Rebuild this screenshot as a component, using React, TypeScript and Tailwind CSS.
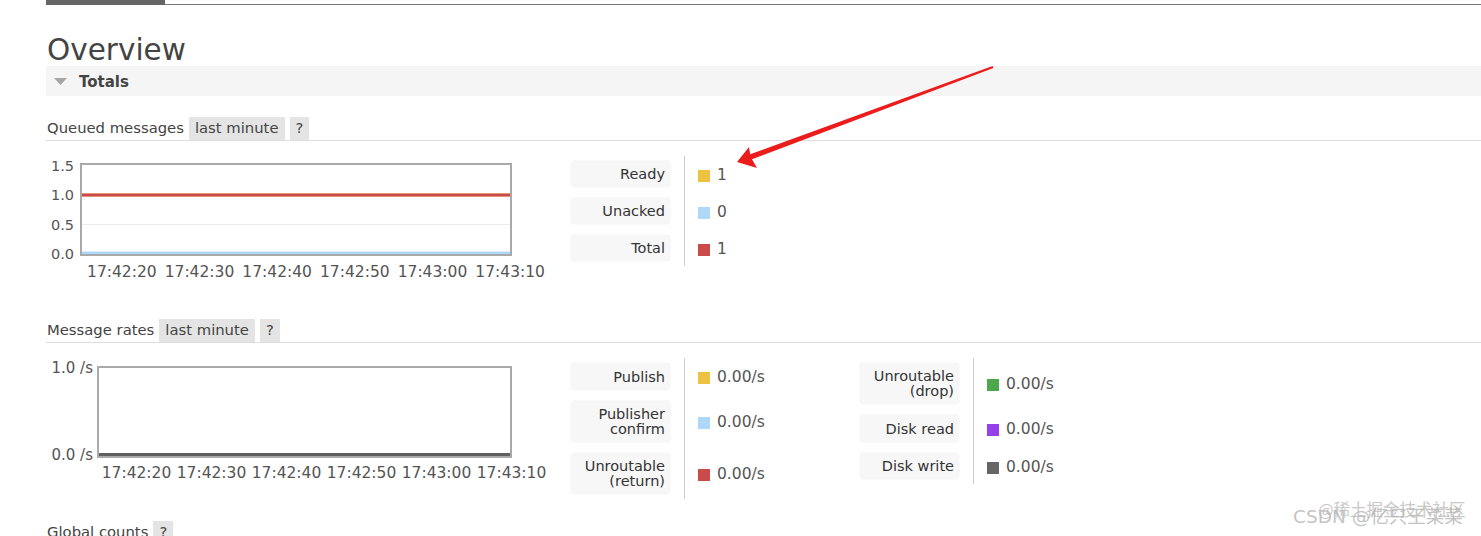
import React from 'react'

const YELLOW = '#edc240'
const BLUE = '#afd8f8'
const RED = '#cb4b4b'
const GREEN = '#4da74d'
const PURPLE = '#9440ed'
const GREY = '#666666'

const times = ['17:42:20', '17:42:30', '17:42:40', '17:42:50', '17:43:00', '17:43:10']

type LegendRow = { label: string[]; color: string; value: string; h: string }

const queued: LegendRow[] = [
    { label: ['Ready'], color: YELLOW, value: '1', h: 'h-[26px]' },
    { label: ['Unacked'], color: BLUE, value: '0', h: 'h-[26px]' },
    { label: ['Total'], color: RED, value: '1', h: 'h-[26px]' },
]

const ratesLeft: LegendRow[] = [
    { label: ['Publish'], color: YELLOW, value: '0.00/s', h: 'h-[27px]' },
    { label: ['Publisher', 'confirm'], color: BLUE, value: '0.00/s', h: 'h-[41px]' },
    { label: ['Unroutable', '(return)'], color: RED, value: '0.00/s', h: 'h-[41px]' },
]

const ratesRight: LegendRow[] = [
    { label: ['Unroutable', '(drop)'], color: GREEN, value: '0.00/s', h: 'h-[41px]' },
    { label: ['Disk read'], color: PURPLE, value: '0.00/s', h: 'h-[27px]' },
    { label: ['Disk write'], color: GREY, value: '0.00/s', h: 'h-[26px]' },
]

function Badge({ children }: { children: React.ReactNode }) {
    return (
        <span className="h-[23px] px-[6px] bg-[#e4e4e4] flex items-center text-[#444]">{children}</span>
    )
}

function SectionHeader({ title, range = true }: { title: string; range?: boolean }) {
    return (
        <div className="flex items-center gap-[5px] border-b border-[#dddddd] text-[14.8px]">
            <span className="h-[23px] flex items-center pl-[1px]">{title}</span>
            {range && <Badge>last minute</Badge>}
            <Badge>?</Badge>
        </div>
    )
}

function Legend({ rows, valuesW }: { rows: LegendRow[]; valuesW: string }) {
    return (
        <div className="flex items-start">
            <div className="w-[99px] flex flex-col gap-[11px] py-[5px]">
                {rows.map(r => (
                    <div
                        key={r.label.join(' ')}
                        className={`${r.h} flex flex-col justify-center items-end pr-[5px] pt-[1px] text-right leading-[15px] text-[#333] bg-[#f7f7f7] rounded-[3px] shadow-[0_0_2px_rgba(0,0,0,0.08)]`}
                    >
                        {r.label.map(l => <span key={l}>{l}</span>)}
                    </div>
                ))}
            </div>
            <div className={`${valuesW} ml-[14px] border-l border-[#cccccc] pl-[13px] flex flex-col gap-[11px] py-[5px]`}>
                {rows.map(r => (
                    <div key={r.label.join(' ')} className={`${r.h} flex items-center text-[#555] text-[15.5px] pt-[3px]`}>
                        <span className="w-[12px] h-[12px] shrink-0" style={{ background: r.color }} />
                        <span className="ml-[7px]">{r.value}</span>
                    </div>
                ))}
            </div>
        </div>
    )
}

function TimeAxis({ className }: { className: string }) {
    return (
        <div className={`grid grid-cols-6 text-[15.5px] leading-[16px] text-[#545454] ${className}`}>
            {times.map(t => (
                <div key={t} className="flex justify-center whitespace-nowrap">{t}</div>
            ))}
        </div>
    )
}

function QueuedChart() {
    return (
        <div className="w-[525px] pt-[7px]">
            <div className="flex items-start">
                <div className="w-[28px] h-[104px] -mt-[5px] flex flex-col justify-between items-end text-[14.5px] leading-[16px] text-[#545454]">
                    <span>1.5</span>
                    <span>1.0</span>
                    <span>0.5</span>
                    <span>0.0</span>
                </div>
                <div className="ml-[6px] w-[432px] h-[93px] border-2 border-[#a9a9a9] bg-white">
                    <svg width="428" height="89" viewBox="0 0 428 89">
                        <line x1="0" y1="59.5" x2="428" y2="59.5" stroke="#ececec" strokeWidth="1" />
                        <line x1="0" y1="30" x2="428" y2="30" stroke={YELLOW} strokeWidth="3" />
                        <line x1="0" y1="30" x2="428" y2="30" stroke={RED} strokeWidth="3" />
                        <line x1="0" y1="88" x2="428" y2="88" stroke={BLUE} strokeWidth="3" />
                    </svg>
                </div>
            </div>
            <TimeAxis className="ml-[37px] w-[466px] mt-[2px]" />
        </div>
    )
}

function RatesChart() {
    return (
        <div className="w-[525px] pt-[8px]">
            <div className="flex items-start">
                <div className="w-[47px] h-[103px] -mt-[6px] flex flex-col justify-between items-end text-[15px] leading-[16px] text-[#545454] whitespace-nowrap">
                    <span>1.0 /s</span>
                    <span>0.0 /s</span>
                </div>
                <div className="ml-[4px] w-[415px] h-[92px] border-2 border-[#a9a9a9] bg-white">
                    <svg width="411" height="88" viewBox="0 0 411 88">
                        <line x1="0" y1="86.5" x2="411" y2="86.5" stroke="#5f5f5f" strokeWidth="3" />
                    </svg>
                </div>
            </div>
            <TimeAxis className="ml-[53px] w-[450px] mt-[2px]" />
        </div>
    )
}

export default function App() {
    return (
        <div className="relative h-[536px] overflow-hidden bg-white text-[#444] text-[14.5px] font-['DejaVu_Sans',sans-serif]">
            <div className="flex h-[5px]">
                <div className="w-[46px]" />
                <div className="w-[119px] h-[5px] bg-[#666]" />
                <div className="flex-1 h-[5px] border-b border-[#777]" />
            </div>

            <div className="pl-[46px]">
                <h1 className="mt-[30px] h-[31px] leading-[31px] text-[29.5px] text-[#444] pl-[1px]">Overview</h1>

                <div className="h-[30px] bg-[#f5f5f5] flex items-center pl-[8px]">
                    <svg width="13" height="7" viewBox="0 0 13 7">
                        <polygon points="0,0 13,0 6.5,7" fill="#a6a6a6" />
                    </svg>
                    <span className="ml-[12px] font-bold text-[#444] text-[15px] pt-[3px]">Totals</span>
                </div>

                <div className="mt-[21px]">
                    <SectionHeader title="Queued messages" />
                </div>
                <div className="mt-[15px] h-[112px] flex items-start">
                    <QueuedChart />
                    <Legend rows={queued} valuesW="w-[176px]" />
                </div>

                <div className="mt-[51px]">
                    <SectionHeader title="Message rates" />
                </div>
                <div className="mt-[15px] h-[141px] flex items-start">
                    <RatesChart />
                    <Legend rows={ratesLeft} valuesW="w-[176px]" />
                    <Legend rows={ratesRight} valuesW="w-[120px]" />
                </div>

                <div className="mt-[22px]">
                    <SectionHeader title="Global counts" range={false} />
                </div>
            </div>

            <svg className="absolute inset-0 pointer-events-none" width="1481" height="536" viewBox="0 0 1481 536">
                <polygon
                    points="737,162 749,147 750.2,154.3 992.6,66 993.4,68 752,159.2 757,168"
                    fill="#ec1c1c"
                />
            </svg>

            <div className="absolute left-[1318px] top-[498px] text-[16.5px] leading-[22px] text-[#c9c9c9] whitespace-nowrap font-['Noto_Sans_CJK_SC',sans-serif]">
                @稀土掘金技术社区
            </div>
            <div className="absolute left-[1293px] top-[505px] text-[18.5px] leading-[24px] text-[#b4b4b4]/80 whitespace-nowrap font-['DejaVu_Sans','Noto_Sans_CJK_SC',sans-serif]">
                CSDN @亿只王菜菜
            </div>
        </div>
    )
}
